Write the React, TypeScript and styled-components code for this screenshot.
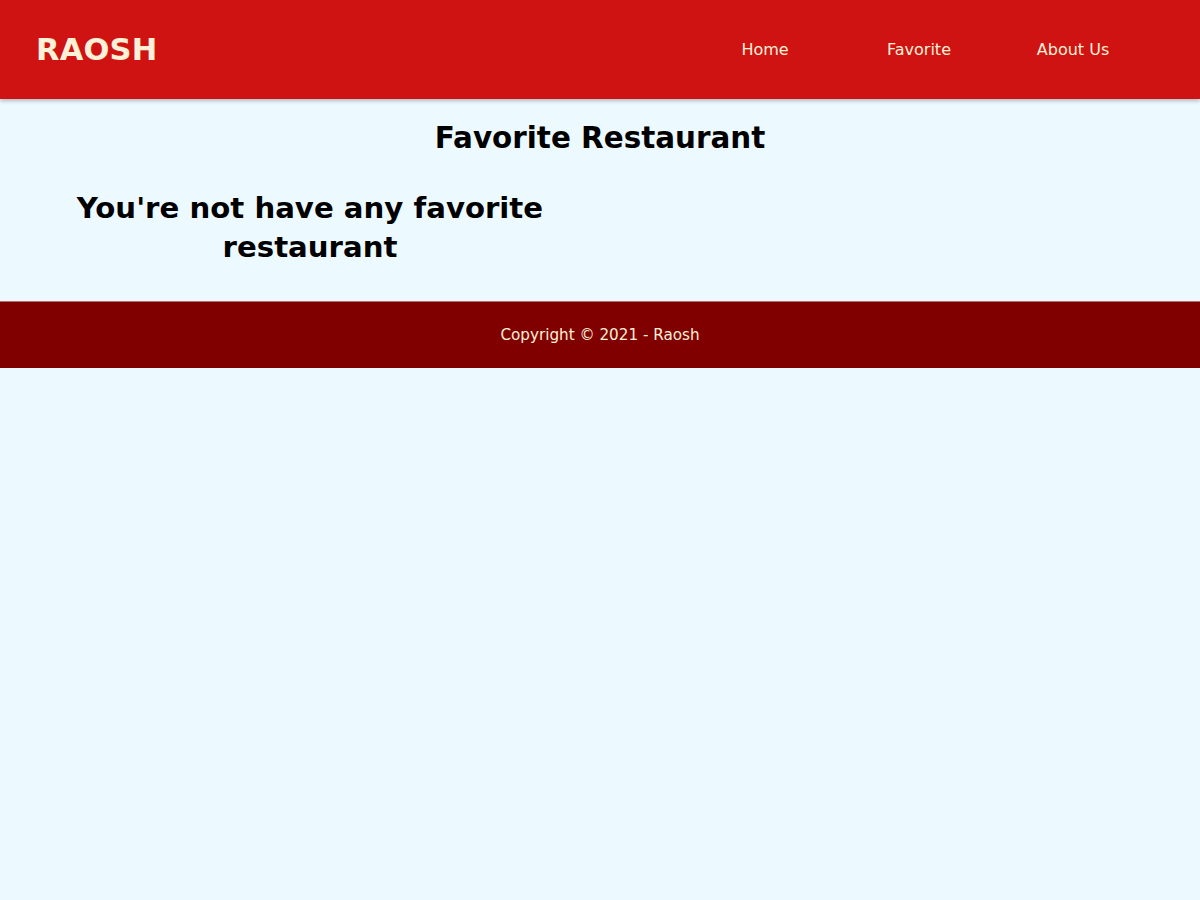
import React from 'react'
import styled, { createGlobalStyle } from 'styled-components'

const FONT = `"DejaVu Sans", "Open Sans", sans-serif`

const GlobalStyle = createGlobalStyle`
    * {
        box-sizing: border-box;
    }
    html, body {
        margin: 0;
        padding: 0;
        background-color: #ecf9ff;
        font-family: ${FONT};
    }
`

const Page = styled.div`
    min-height: 900px;
    background-color: #ecf9ff;
`

const AppBar = styled.header`
    height: 99px;
    display: flex;
    align-items: center;
    justify-content: space-between;
    padding: 0 50px 0 36px;
    background-color: #cf1212;
    box-shadow: 0 2px 4px rgba(0, 0, 0, 0.25);
    position: relative;
`

const Brand = styled.h1`
    margin: 0;
    font-size: 30.5px;
    font-weight: 700;
    color: #fff1d8;
    letter-spacing: 0.2px;
`

const NavList = styled.ul`
    display: flex;
    list-style: none;
    margin: 0;
    padding: 0;
`

const NavItem = styled.li`
    width: 154px;
    text-align: center;
`

const NavLink = styled.a`
    color: #fff1d8;
    font-size: 16px;
    text-decoration: none;
`

const Main = styled.main`
    padding: 20px 20px 34px;
`

const PageTitle = styled.h2`
    margin: 0;
    font-size: 29.4px;
    line-height: 39px;
    font-weight: 700;
    text-align: center;
    color: #000;
`

const RestaurantGrid = styled.div`
    display: grid;
    grid-template-columns: 1fr 1fr;
    margin-top: 31px;
`

const EmptyText = styled.h3`
    margin: 0;
    font-size: 29.2px;
    line-height: 39px;
    font-weight: 700;
    text-align: center;
    color: #000;
`

const Footer = styled.footer`
    height: 67px;
    display: flex;
    align-items: center;
    justify-content: center;
    background-color: #800000;
    border-top: 1px solid #b07070;
    color: #fff1d8;
    font-size: 15.2px;
`

const App = () => (
    <>
        <GlobalStyle />
        <Page>
            <AppBar>
                <Brand>RAOSH</Brand>
                <nav>
                    <NavList>
                        <NavItem>
                            <NavLink href="#/home">Home</NavLink>
                        </NavItem>
                        <NavItem>
                            <NavLink href="#/favorite">Favorite</NavLink>
                        </NavItem>
                        <NavItem>
                            <NavLink href="#/about">About Us</NavLink>
                        </NavItem>
                    </NavList>
                </nav>
            </AppBar>
            <Main>
                <PageTitle>Favorite Restaurant</PageTitle>
                <RestaurantGrid>
                    <EmptyText>You're not have any favorite restaurant</EmptyText>
                </RestaurantGrid>
            </Main>
            <Footer>Copyright © 2021 - Raosh</Footer>
        </Page>
    </>
)

export default App
